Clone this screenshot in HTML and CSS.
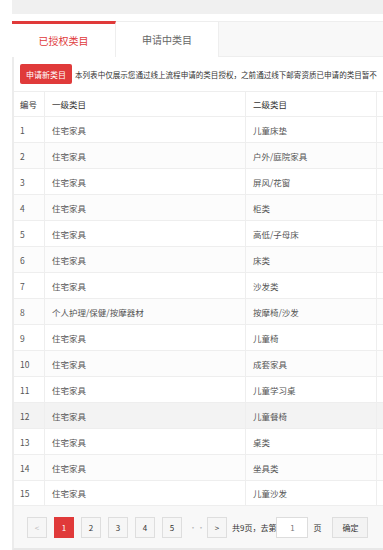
FILE: index.html
```html
<!DOCTYPE html>
<html lang="zh-CN">
<head>
  <meta charset="UTF-8" />
  <title>已授权类目</title>
  <link rel="stylesheet" href="styles.css">
</head>
<body>
  <div class="page">
    <div class="topbar"></div>

    <div class="tabs">
      <div class="tab active">已授权类目</div>
      <div class="tab">申请中类目</div>
      <div class="tab-rest"></div>
    </div>

    <div class="panel">
      <div class="notice">
        <button class="btn-apply">申请新类目</button>
        <span class="notice-text">本列表中仅展示您通过线上流程申请的类目授权，之前通过线下邮寄资质已申请的类目暂不</span>
      </div>

      <table class="cat-table">
        <colgroup>
          <col class="c-no">
          <col class="c-first">
          <col class="c-second">
          <col class="c-more">
        </colgroup>
        <thead>
          <tr><th>编号</th><th>一级类目</th><th>二级类目</th><th></th></tr>
        </thead>
        <tbody id="rows"></tbody>
      </table>

      <div class="pager">
        <span class="pg disabled">&lt;</span>
        <span class="pg current">1</span>
        <span class="pg">2</span>
        <span class="pg">3</span>
        <span class="pg">4</span>
        <span class="pg">5</span>
        <span class="dots">···</span>
        <span class="pg">&gt;</span>
        <span class="pg-text">共9页，去第</span>
        <input class="pg-input" type="text" value="1" />
        <span class="pg-text">页</span>
        <button class="pg-go">确定</button>
      </div>
    </div>
  </div>

  <script>
    const rows = [
      ["住宅家具", "儿童床垫"],
      ["住宅家具", "户外/庭院家具"],
      ["住宅家具", "屏风/花窗"],
      ["住宅家具", "柜类"],
      ["住宅家具", "高低/子母床"],
      ["住宅家具", "床类"],
      ["住宅家具", "沙发类"],
      ["个人护理/保健/按摩器材", "按摩椅/沙发"],
      ["住宅家具", "儿童椅"],
      ["住宅家具", "成套家具"],
      ["住宅家具", "儿童学习桌"],
      ["住宅家具", "儿童餐椅"],
      ["住宅家具", "桌类"],
      ["住宅家具", "坐具类"],
      ["住宅家具", "儿童沙发"]
    ];

    const tbody = document.getElementById("rows");
    rows.forEach((r, i) => {
      const tr = document.createElement("tr");
      if (i === 11) tr.className = "hover";
      tr.innerHTML = `<td>${i + 1}</td><td>${r[0]}</td><td>${r[1]}</td><td></td>`;
      tbody.appendChild(tr);
    });
  </script>
</body>
</html>
```

FILE: styles.css
```css
body {
  margin: 0;
  overflow: hidden;
  background: #fff;
  font-family: "Noto Sans CJK SC", "Liberation Sans", sans-serif;
  color: #555;
}

.page {
  padding-left: 12px;
  width: 520px;
}

.topbar {
  height: 14px;
  background: #f0f0f0;
}

.tabs {
  display: flex;
  height: 36px;
  margin-top: 7px;
}

.tab {
  width: 103px;
  display: flex;
  align-items: center;
  justify-content: center;
  font-size: 10px;
  color: #666;
  background: #fff;
  border-top: 1px solid #eee;
  border-right: 1px solid #eee;
  box-sizing: border-box;
}

.tab.active {
  width: 104px;
  color: #e03a3a;
  border-top: 3px solid #e03a3a;
}

.tab-rest {
  flex: 1;
  background: #f8f8f8;
  border-top: 1px solid #eee;
  border-bottom: 1px solid #eee;
}

.panel {
  border-left: 2px solid #ececec;
  border-bottom: 3px solid #e8e8e8;
  background: #fff;
}

.notice {
  display: flex;
  align-items: center;
  gap: 3px;
  padding: 7px 0 7px 6px;
  white-space: nowrap;
  border-bottom: 1px solid #eee;
}

.btn-apply {
  height: 20px;
  padding: 0 6px;
  border: none;
  border-radius: 2px;
  background: #e03a3a;
  color: #fff;
  font-family: inherit;
  font-size: 8px;
}

.notice-text {
  font-size: 7.55px;
  color: #333;
}

.cat-table {
  border-collapse: separate;
  border-spacing: 0;
  table-layout: fixed;
  width: 463px;
  font-size: 8.5px;
}

.c-no { width: 31px; }
.c-first { width: 201px; }
.c-second { width: 131px; }
.c-more { width: 100px; }

.cat-table th,
.cat-table td {
  box-sizing: border-box;
  height: 26px;
  padding: 0 6px;
  text-align: left;
  font-weight: normal;
  border-bottom: 1px solid #eee;
  border-right: 1px solid #eee;
}

.cat-table th {
  color: #333;
  height: 25px;
}

.cat-table tbody tr:last-child td {
  height: 25px;
}

.cat-table td:nth-child(2),
.cat-table td:nth-child(3),
.cat-table th:nth-child(2),
.cat-table th:nth-child(3) {
  padding-left: 7px;
}

.cat-table tbody tr:nth-child(even) {
  background: #fcfcfc;
}

.cat-table tbody tr.hover {
  background: #f3f3f3;
}

.pager {
  display: flex;
  align-items: center;
  gap: 7px;
  height: 42px;
  padding-left: 13px;
  background: #f8f8f8;
  font-size: 8px;
  color: #333;
}

.pg {
  width: 20px;
  height: 21px;
  box-sizing: border-box;
  display: flex;
  align-items: center;
  justify-content: center;
  border: 1px solid #dedede;
  background: #f6f6f6;
}

.pg.current {
  background: #e03a3a;
  border-color: #e03a3a;
  color: #fff;
}

.pg.disabled {
  color: #bbb;
}

.dots {
  width: 11px;
  color: #bbb;
}

.pg-text {
  margin-left: -2px;
}

.pg-input {
  width: 32px;
  height: 21px;
  box-sizing: border-box;
  margin-left: -7px;
  border: 1px solid #ddd;
  text-align: center;
  font-family: inherit;
  font-size: 8px;
  color: #777;
}

.pg-go {
  width: 36px;
  height: 21px;
  margin-left: 4px;
  border: 1px solid #dedede;
  background: #f3f3f3;
  font-family: inherit;
  font-size: 8px;
  color: #333;
}
```
